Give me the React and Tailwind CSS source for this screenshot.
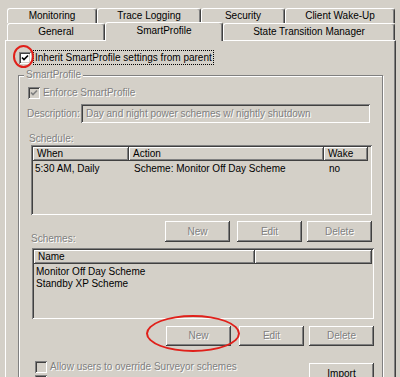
import React from "react";

const DIS = "text-[#808080] [text-shadow:1px_1px_0_#fff]";
const RAISED = "shadow-[inset_-1px_-1px_#404040,inset_1px_1px_#fff,inset_-2px_-2px_#808080]";
const SUNKEN = "shadow-[inset_1px_1px_#808080,inset_-1px_-1px_#fff,inset_2px_2px_#404040,inset_-2px_-2px_#d4d0c8]";

function Tab({ w, children }) {
  return (
    <div
      className={`${w} h-full flex items-center justify-center border-t border-l border-t-white border-l-white border-r border-r-[#404040] rounded-t-[3px] shadow-[inset_-1px_0_#808080] bg-[#d4d0c8]`}
    >
      {children}
    </div>
  );
}

function Check({ checked, disabled }) {
  return (
    <div
      className={`w-[12px] h-[12px] shrink-0 flex items-center justify-center ${disabled ? "bg-[#d4d0c8]" : "bg-white"} ${SUNKEN}`}
    >
      {checked && (
        <svg width="8" height="8" viewBox="0 0 8 8">
          <path
            d="M1 3.5 L3 5.6 L7 1.5"
            stroke={disabled ? "#808080" : "#000"}
            strokeWidth="1.7"
            fill="none"
          />
        </svg>
      )}
    </div>
  );
}

function Btn({ className, disabled, children }) {
  return (
    <div
      className={`flex items-center justify-center bg-[#d4d0c8] ${RAISED} ${disabled ? DIS : "text-black"} ${className}`}
    >
      {children}
    </div>
  );
}

function Head({ className, children }) {
  return (
    <div className={`h-[14px] flex items-center pl-[4px] ${RAISED} ${className}`}>
      {children}
    </div>
  );
}

export default function App() {
  return (
    <div className="relative w-[400px] h-[377px] overflow-hidden bg-[#d4d0c8] font-['Liberation_Sans','Arial',sans-serif] text-[10px] leading-[12px] text-black">
      <div className="pt-[8px]">
        {/* Tab row 1 */}
        <div className="flex ml-[7px] h-[15px]">
          <Tab w="w-[90px]">Monitoring</Tab>
          <Tab w="w-[104px]">Trace Logging</Tab>
          <Tab w="w-[84px]">Security</Tab>
          <Tab w="w-[110px]">Client Wake-Up</Tab>
        </div>
        {/* Tab row 2 */}
        <div className="flex items-start ml-[7px] h-[17px]">
          <Tab w="w-[98px]">General</Tab>
          <div className="relative z-10 -mt-px h-[19px] w-[118px] flex items-center justify-center pb-[2px] border-t border-l border-t-white border-l-white border-r border-r-[#404040] rounded-t-[3px] shadow-[inset_-1px_0_#808080] bg-[#d4d0c8]">
            SmartProfile
          </div>
          <Tab w="w-[172px]">State Transition Manager</Tab>
        </div>

        {/* Panel */}
        <div className="ml-[5px] w-[391px] h-[340px] border-l border-t border-l-white border-t-white border-r border-r-[#404040] shadow-[inset_-1px_0_#808080]">
          <div className="flex items-center h-[15px] mt-[9px] ml-[13px]">
            <Check checked />
            <span className="ml-[2px] px-[1px] h-[15px] flex items-center border border-dotted border-black">
              Inherit SmartProfile settings from parent
            </span>
          </div>

          {/* Group box */}
          <div className="relative ml-[12px] mt-[10px] w-[365px] h-[320px] border border-[#808080] shadow-[inset_1px_1px_#fff,1px_1px_#fff]">
            <span className={`absolute -top-[7px] left-[5px] px-[2px] bg-[#d4d0c8] ${DIS}`}>
              SmartProfile
            </span>

            <div className="flex items-center mt-[10px] ml-[9px] h-[13px]">
              <Check checked disabled />
              <span className={`ml-[3px] ${DIS}`}>Enforce SmartProfile</span>
            </div>

            <div className="flex items-center mt-[5px] ml-[8px]">
              <span className={`w-[54px] ${DIS}`}>Description:</span>
              <div className={`h-[19px] w-[289px] flex items-center pl-[5px] ${SUNKEN} ${DIS}`}>
                Day and night power schemes w/ nightly shutdown
              </div>
            </div>

            <div className={`mt-[9px] ml-[10px] h-[13px] leading-[13px] ${DIS}`}>Schedule:</div>

            <div className={`ml-[12px] w-[341px] h-[70px] p-[2px] ${SUNKEN}`}>
              <div className="flex">
                <Head className="w-[96px]">When</Head>
                <Head className="w-[195px]">Action</Head>
                <Head className="w-[44px]">Wake</Head>
              </div>
              <div className="flex pt-[2px]">
                <div className="w-[96px] pl-[2px]">5:30 AM, Daily</div>
                <div className="w-[195px] pl-[5px]">Scheme: Monitor Off Day Scheme</div>
                <div className="w-[44px] pl-[5px]">no</div>
              </div>
            </div>

            <div className="flex items-end mt-[6px] h-[21px]">
              <span className={`ml-[12px] w-[134px] mb-[-3px] ${DIS}`}>Schemes:</span>
              <Btn disabled className="w-[65px] h-[21px]">New</Btn>
              <Btn disabled className="ml-[7px] w-[65px] h-[21px]">Edit</Btn>
              <Btn disabled className="ml-[5px] w-[65px] h-[21px]">Delete</Btn>
            </div>

            <div className={`mt-[6px] ml-[13px] w-[342px] h-[71px] p-[2px] ${SUNKEN}`}>
              <div className="flex">
                <Head className="w-[221px]">Name</Head>
                <Head className="w-[117px]"></Head>
              </div>
              <div className="pt-[2px] pl-[2px]">
                <div className="h-[12px]">Monitor Off Day Scheme</div>
                <div className="h-[12px]">Standby XP Scheme</div>
              </div>
            </div>

            <div className="flex mt-[7px] ml-[147px] h-[20px]">
              <Btn disabled className="w-[65px] h-[20px]">New</Btn>
              <Btn disabled className="ml-[8px] w-[65px] h-[20px]">Edit</Btn>
              <Btn disabled className="ml-[5px] w-[65px] h-[20px]">Delete</Btn>
            </div>

            <div className="flex mt-[15px]">
              <div className="ml-[16px]">
                <div className="flex items-center h-[12px]">
                  <Check disabled />
                  <span className={`ml-[3px] ${DIS}`}>Allow users to override Surveyor schemes</span>
                </div>
                <div className="flex items-center h-[12px] mt-[2px]">
                  <Check disabled />
                </div>
              </div>
              <Btn className="ml-auto mr-[8px] mt-[2px] w-[65px] h-[21px]">Import</Btn>
            </div>
          </div>
        </div>
      </div>

      {/* Red annotation ellipses */}
      <div className="absolute left-[13px] top-[45px] w-[21px] h-[23px] rounded-[50%] border-2 border-[#e0201a]" />
      <div className="absolute left-[146px] top-[315px] w-[94px] h-[37px] rounded-[50%] border-2 border-[#e0201a]" />
    </div>
  );
}
